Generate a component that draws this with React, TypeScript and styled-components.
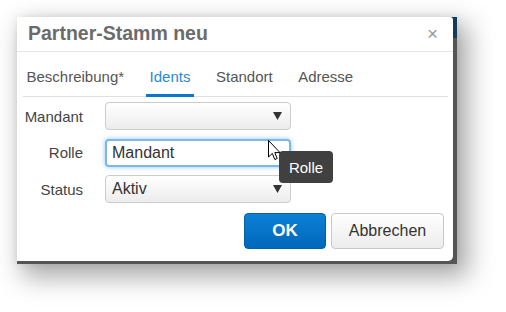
import React from "react";
import styled, { createGlobalStyle } from "styled-components";

const GlobalStyle = createGlobalStyle`
  html, body {
    margin: 0;
    padding: 0;
    background: #ffffff;
  }
  body {
    font-family: "Liberation Sans", Arial, sans-serif;
  }
`;

const Page = styled.div`
  width: 506px;
  height: 312px;
  padding: 17px 0 0 17px;
  box-sizing: border-box;
`;

// the cropped screen: modal backdrop behind the dialog
const Frame = styled.div`
  position: relative;
  width: 440px;
  height: 247px;
  overflow: hidden;
  background: linear-gradient(to bottom, #173a5a 0 21px, #555555 21px);
  box-shadow: 8px 10px 24px 3px rgba(0, 0, 0, 0.34),
    0 0 8px rgba(0, 0, 0, 0.08);
`;

const Dialog = styled.div`
  position: relative;
  width: 436px;
  height: 244px;
  background: #ffffff;
  border-radius: 0 3px 5px 0;
  display: flex;
  flex-direction: column;
`;

const Header = styled.div`
  height: 35px;
  padding: 0 15px 2px 11px;
  box-sizing: border-box;
  display: flex;
  align-items: center;
  justify-content: space-between;
  border-bottom: 1px solid #e5e5e5;
`;

const Title = styled.h1`
  margin: 0;
  font-size: 19.5px;
  font-weight: bold;
  color: #6b6b6b;
`;

const Close = styled.span`
  font-size: 19px;
  line-height: 1;
  color: #9a9a9a;
  margin-top: 1px;
`;

const TabBar = styled.div`
  display: flex;
  gap: 18px;
  margin: 16px 5px 0 6px;
  border-bottom: 1px solid #e0e0e0;
`;

const Tab = styled.div<{ $active?: boolean }>`
  padding: 0 4px 9px 3.5px;
  font-size: 15px;
  line-height: 17px;
  color: ${(p) => (p.$active ? "#2b8ad6" : "#555555")};
  border-bottom: 3px solid ${(p) => (p.$active ? "#0a78cc" : "transparent")};
  margin-bottom: -1px;
`;

const Form = styled.div`
  display: grid;
  grid-template-columns: 66px 186px;
  grid-auto-rows: 28px;
  column-gap: 22px;
  row-gap: 8.5px;
  padding-top: 5px;
`;

const Label = styled.label`
  font-size: 15px;
  color: #444444;
  text-align: right;
  align-self: center;
`;

const Select = styled.div`
  position: relative;
  box-sizing: border-box;
  height: 28px;
  border: 1px solid #cccccc;
  border-radius: 4px;
  background: linear-gradient(to bottom, #ffffff, #ededed);
  padding: 0 24px 0 6px;
  display: flex;
  align-items: center;
  font-size: 16px;
  color: #333333;
`;

const Input = styled.div`
  box-sizing: border-box;
  height: 28px;
  border: 2px solid #7bb8e6;
  border-radius: 4px;
  background: #ffffff;
  box-shadow: 0 0 5px rgba(102, 175, 233, 0.7);
  padding: 0 6px 0 5px;
  display: flex;
  align-items: center;
  font-size: 16px;
  color: #333333;
`;

const Arrow = styled.svg`
  position: absolute;
  right: 8px;
  top: 9px;
`;

const Footer = styled.div`
  display: flex;
  justify-content: flex-end;
  gap: 5px;
  padding: 10px 9px 0 0;
`;

const Button = styled.button<{ $primary?: boolean }>`
  height: 36px;
  box-sizing: border-box;
  border-radius: 4px;
  font-family: "Liberation Sans", Arial, sans-serif;
  font-size: ${(p) => (p.$primary ? "17px" : "16px")};
  font-weight: ${(p) => (p.$primary ? "bold" : "normal")};
  color: ${(p) => (p.$primary ? "#ffffff" : "#333333")};
  border: 1px solid ${(p) => (p.$primary ? "#0060a8" : "#c8c8c8")};
  background: ${(p) =>
    p.$primary
      ? "linear-gradient(to bottom, #0c80d6, #0068b9)"
      : "linear-gradient(to bottom, #ffffff, #ececec)"};
  width: ${(p) => (p.$primary ? "82px" : "113px")};
  padding: 0;
`;

const Tooltip = styled.div`
  position: absolute;
  left: 262px;
  top: 134px;
  width: 54px;
  height: 32px;
  border-radius: 4px;
  background: #404040;
  color: #ffffff;
  font-size: 15px;
  display: flex;
  align-items: center;
  justify-content: center;
`;

const Cursor = styled.svg`
  position: absolute;
  left: 251px;
  top: 123px;
`;

const SelectArrow = () => (
  <Arrow width="9" height="8" viewBox="0 0 9 8">
    <path d="M0 0 H9 L4.5 8 Z" fill="#333333" />
  </Arrow>
);

export default function App() {
  return (
    <>
      <GlobalStyle />
      <Page>
        <Frame>
          <Dialog>
            <Header>
              <Title>Partner-Stamm neu</Title>
              <Close>×</Close>
            </Header>
            <TabBar>
              <Tab>Beschreibung*</Tab>
              <Tab $active>Idents</Tab>
              <Tab>Standort</Tab>
              <Tab>Adresse</Tab>
            </TabBar>
            <Form>
              <Label>Mandant</Label>
              <Select>
                <SelectArrow />
              </Select>
              <Label>Rolle</Label>
              <Input>Mandant</Input>
              <Label>Status</Label>
              <Select>
                Aktiv
                <SelectArrow />
              </Select>
            </Form>
            <Footer>
              <Button $primary>OK</Button>
              <Button>Abbrechen</Button>
            </Footer>
            <Tooltip>Rolle</Tooltip>
            <Cursor width="13" height="21" viewBox="0 0 13 21">
              <path
                d="M0.5 0.5 V17 L4.3 13.4 L6.8 19.5 L9.2 18.5 L6.8 12.6 H12 Z"
                fill="#ffffff"
                stroke="#000000"
                strokeWidth="1"
                strokeLinejoin="round"
              />
            </Cursor>
          </Dialog>
        </Frame>
      </Page>
    </>
  );
}
